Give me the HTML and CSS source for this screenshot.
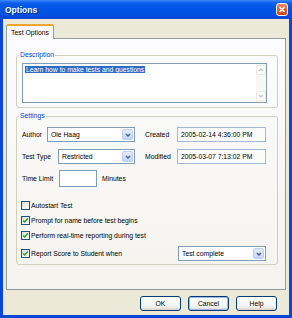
FILE: index.html
```html
<!DOCTYPE html>
<html lang="en">

<head>
    <meta charset="UTF-8">
    <title>Options</title>
    <link rel="stylesheet" href="styles.css">
</head>

<body>
    <div class="window">
        <!-- title bar -->
        <div class="titlebar">
            <span class="title">Options</span>
            <span class="close">
                <svg viewBox="0 0 12 13" width="12" height="13">
                    <path d="M3.5 4l5 5M8.5 4l-5 5" stroke="#fff" stroke-width="1.6" fill="none"></path>
                </svg>
            </span>
        </div>

        <div class="client">
            <div class="tabs">
                <div class="tab">Test Options</div>
            </div>

            <div class="panel">
                <fieldset class="group desc">
                    <legend>Description</legend>
                    <div class="memo">
                        <div class="memo-text"><span class="sel">Learn how to make tests and questions</span></div>
                        <div class="vscroll">
                            <span class="sbtn">
                                <svg viewBox="0 0 8 8" width="8" height="8"><path d="M2 5l2-2 2 2" stroke="#c6c5b9" stroke-width="1.2" fill="none"></path></svg>
                            </span>
                            <span class="sbtn">
                                <svg viewBox="0 0 8 8" width="8" height="8"><path d="M2 3l2 2 2-2" stroke="#c6c5b9" stroke-width="1.2" fill="none"></path></svg>
                            </span>
                        </div>
                    </div>
                </fieldset>

                <fieldset class="group settings">
                    <legend>Settings</legend>

                    <div class="row">
                        <div class="left">
                            <span>Author</span>
                            <div class="combo author">
                                <span class="combo-text">Ole Haag</span>
                                <span class="drop"><svg viewBox="0 0 8 8" width="8" height="8"><path d="M2 3l2 2 2-2" stroke="#4d6185" stroke-width="1.5" fill="none"></path></svg></span>
                            </div>
                        </div>
                        <div class="right">
                            <span class="rlabel">Created</span>
                            <div class="field">2005-02-14 4:36:00 PM</div>
                        </div>
                    </div>

                    <div class="row row2">
                        <div class="left">
                            <span>Test Type</span>
                            <div class="combo type">
                                <span class="combo-text">Restricted</span>
                                <span class="drop"><svg viewBox="0 0 8 8" width="8" height="8"><path d="M2 3l2 2 2-2" stroke="#4d6185" stroke-width="1.5" fill="none"></path></svg></span>
                            </div>
                        </div>
                        <div class="right">
                            <span class="rlabel">Modified</span>
                            <div class="field">2005-03-07 7:13:02 PM</div>
                        </div>
                    </div>

                    <div class="row row3">
                        <span class="tl-label">Time Limit</span>
                        <div class="textbox"></div>
                        <span class="minutes">Minutes</span>
                    </div>

                    <div class="checks">
                        <div class="check"><span class="box"></span>Autostart Test</div>
                        <div class="check"><span class="box"><svg viewBox="0 0 9 9" width="7" height="7"><path d="M1.5 4.5l2 2 4-4.5" stroke="#21a121" stroke-width="1.8" fill="none"></path></svg></span>Prompt for name before test begins</div>
                        <div class="check"><span class="box"><svg viewBox="0 0 9 9" width="7" height="7"><path d="M1.5 4.5l2 2 4-4.5" stroke="#21a121" stroke-width="1.8" fill="none"></path></svg></span>Perform real-time reporting during test</div>
                        <div class="check report">
                            <span class="check-in"><span class="box"><svg viewBox="0 0 9 9" width="7" height="7"><path d="M1.5 4.5l2 2 4-4.5" stroke="#21a121" stroke-width="1.8" fill="none"></path></svg></span>Report Score to Student when</span>
                            <div class="combo when">
                                <span class="combo-text">Test complete</span>
                                <span class="drop"><svg viewBox="0 0 8 8" width="8" height="8"><path d="M2 3l2 2 2-2" stroke="#4d6185" stroke-width="1.5" fill="none"></path></svg></span>
                            </div>
                        </div>
                    </div>
                </fieldset>
            </div>

            <div class="buttons">
                <button class="btn">OK</button>
                <button class="btn default">Cancel</button>
                <button class="btn">Help</button>
            </div>
        </div>
    </div>
</body>

</html>
```

FILE: styles.css
```css
/* page */
body {
    margin: 0;
    padding: 0;
}

.window {
    width: 292px;
    height: 318px;
    display: flex;
    flex-direction: column;
    background: #0a46d8;
    font-family: "Liberation Sans", Arial, sans-serif;
    font-size: 6.8px;
    color: #000;
}

/* title bar */
.titlebar {
    height: 19px;
    display: flex;
    align-items: center;
    justify-content: space-between;
    padding: 0 4px 0 5px;
    background: linear-gradient(#3d8af7, #0a5eea 3px, #0055e5 8px, #0051e0 14px, #0644d0);
}

.title {
    color: #fff;
    font-weight: bold;
    font-size: 8.5px;
    text-shadow: 1px 1px #0b2b8c;
}

.close {
    width: 12px;
    height: 13px;
    box-sizing: border-box;
    border: 1px solid #fff;
    border-radius: 3px;
    background: linear-gradient(#ef8a66, #e05a32 55%, #cf4218);
    display: flex;
    justify-content: center;
    align-items: center;
}

.close svg {
    margin: -1px;
}

/* window body */
.client {
    flex: 1;
    margin: 0 3px 3px;
    background: #ece9d8;
    display: flex;
    flex-direction: column;
    padding: 5px 3px 4px 3px;
}

.tabs {
    display: flex;
    margin-bottom: -1px;
    position: relative;
    z-index: 1;
}

.tab {
    width: 48px;
    height: 15px;
    box-sizing: border-box;
    border: 1px solid #919b9c;
    border-top: 2px solid #f7a330;
    border-bottom: none;
    border-radius: 2px 2px 0 0;
    background: #fcfcfe;
    display: flex;
    align-items: center;
    justify-content: center;
    padding-bottom: 1px;
}

.panel {
    flex: 1;
    border: 1px solid #919b9c;
    background: linear-gradient(#fcfcfe, #f4f3ee);
    padding-top: 12px;
}

/* group boxes */
.group {
    margin: 0 7px 0 9px;
    padding: 0 0 0 2px;
    border: 1px solid #d0d0bf;
    border-radius: 3px;
    min-inline-size: 0;
}

.group legend {
    padding: 0 1px;
    line-height: 8px;
    color: #0046d5;
}

.desc {
    padding-top: 4px;
    padding-bottom: 4px;
}

.settings {
    margin-top: 4px;
    padding-top: 7px;
    padding-bottom: 3px;
}

/* description box */
.memo {
    width: 245px;
    height: 40px;
    margin-left: 3px;
    box-sizing: border-box;
    border: 1px solid #7f9db9;
    background: #fff;
    display: flex;
}

.memo-text {
    flex: 1;
    padding: 1px 2px;
    line-height: 9px;
}

.sel {
    background: #316ac5;
    color: #fff;
    padding: 0 1px;
}

.vscroll {
    width: 10px;
    background: #f7f7f3;
    display: flex;
    flex-direction: column;
    justify-content: space-between;
    padding: 1px 0;
}

.sbtn {
    height: 10px;
    box-sizing: border-box;
    border: 1px solid #ebeae2;
    border-radius: 2px;
    background: #fbfbf9;
    display: flex;
    justify-content: center;
    align-items: center;
}

/* settings rows */
.row {
    width: 244px;
    margin-left: 3px;
    height: 15px;
    display: flex;
    align-items: center;
    justify-content: space-between;
}

.row2 {
    margin-top: 7px;
}

.row3 {
    margin-top: 6px;
    height: 17px;
    justify-content: flex-start;
}

.left {
    width: 113px;
    display: flex;
    align-items: center;
    justify-content: space-between;
}

.right {
    display: flex;
    align-items: center;
}

.rlabel {
    width: 32px;
}

.field {
    width: 89px;
    height: 15px;
    box-sizing: border-box;
    border: 1px solid #a5b8d3;
    background: #fbfbf9;
    padding-left: 3px;
    display: flex;
    align-items: center;
}

.combo {
    height: 15px;
    box-sizing: border-box;
    border: 1px solid #7f9db9;
    background: #fff;
    display: flex;
    align-items: center;
    justify-content: space-between;
    padding: 1px 1px 1px 3px;
}

.combo.author {
    width: 88px;
}

.combo.type {
    width: 77px;
}

.combo.when {
    width: 88px;
}

.drop {
    width: 11px;
    height: 11px;
    box-sizing: border-box;
    border: 1px solid #bccdf5;
    border-radius: 2px;
    background: linear-gradient(#e3ebfd, #c3d4fa);
    display: flex;
    justify-content: center;
    align-items: center;
}

.tl-label {
    width: 37px;
}

.textbox {
    width: 38px;
    height: 17px;
    box-sizing: border-box;
    border: 1px solid #7f9db9;
    background: #fff;
}

.minutes {
    margin-left: 5px;
}

/* checkboxes */
.checks {
    margin-top: 11px;
}

.check {
    height: 15px;
    display: flex;
    align-items: center;
    padding-left: 2px;
}

.check.report {
    width: 245px;
    margin-top: 3px;
    justify-content: space-between;
}

.check-in {
    display: flex;
    align-items: center;
}

.box {
    width: 9px;
    height: 9px;
    box-sizing: border-box;
    border: 1px solid #1c5180;
    background: linear-gradient(135deg, #dcdcd7, #fff);
    margin-right: 1px;
    display: flex;
    justify-content: center;
    align-items: center;
}

/* buttons */
.buttons {
    margin-top: 6px;
    padding-right: 9px;
    display: flex;
    justify-content: flex-end;
    gap: 7px;
}

.btn {
    width: 41px;
    height: 15px;
    padding: 0;
    border: 1px solid #003c74;
    border-radius: 3px;
    background: linear-gradient(#fff, #f3f3ef 75%, #d8d2c6);
    font-family: "Liberation Sans", Arial, sans-serif;
    font-size: 6.8px;
    color: #000;
}

.btn.default {
    box-shadow: inset 0 0 0 1px #9db9eb;
}
```
